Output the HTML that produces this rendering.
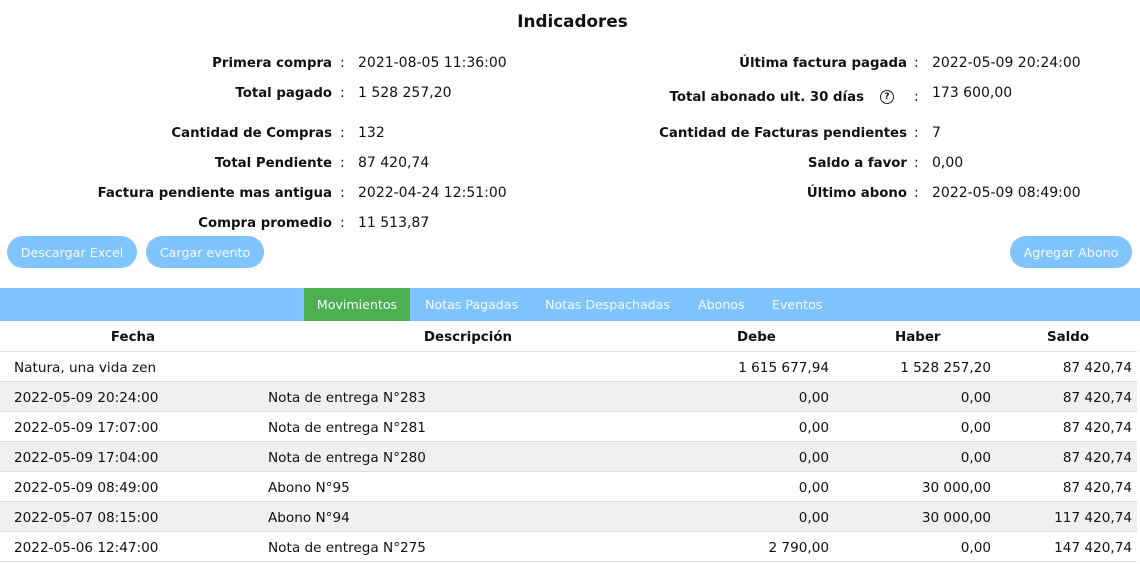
<!DOCTYPE html>
<html><head><meta charset="utf-8"><style>
body{margin:0;width:1140px;height:560px;overflow:hidden;background:#fff;font-family:"DejaVu Sans",Verdana,sans-serif;font-size:14px;color:#111;position:relative}
.a{position:absolute;white-space:nowrap;line-height:18px;margin-top:1px}
.l{font-weight:bold;text-align:right;font-size:13.3px;margin-top:2px}
.btn{position:absolute;top:236px;height:32px;border-radius:16px;background:#80c4ff;color:#f4faff;line-height:33px;text-align:center;font-size:12.7px}
.bar{position:absolute;top:288px;left:0;width:1140px;height:33px;background:#80c4ff}
.tab{position:absolute;top:288px;height:33px;line-height:33px;color:#f4faff;font-size:12.6px}
.row{position:absolute;left:0;width:1137px;height:30px;border-bottom:1px solid #ddd;box-sizing:border-box;font-size:13.6px}
.g{background:#f0f0f0}
.c{position:absolute;line-height:32px;white-space:nowrap}
.r{text-align:right}
</style></head><body>
<div class="a" style="left:0;width:1145px;text-align:center;top:9px;font-size:16.8px;font-weight:bold;line-height:22px">Indicadores</div>

<div class="a l" style="right:808px;top:53px">Primera compra</div><div class="a" style="left:340px;top:53px">:</div><div class="a" style="left:358px;top:53px">2021-08-05 11:36:00</div>
<div class="a l" style="right:808px;top:83px">Total pagado</div><div class="a" style="left:340px;top:83px">:</div><div class="a" style="left:358px;top:83px">1 528 257,20</div>
<div class="a l" style="right:808px;top:123px">Cantidad de Compras</div><div class="a" style="left:340px;top:123px">:</div><div class="a" style="left:358px;top:123px">132</div>
<div class="a l" style="right:808px;top:153px">Total Pendiente</div><div class="a" style="left:340px;top:153px">:</div><div class="a" style="left:358px;top:153px">87 420,74</div>
<div class="a l" style="right:808px;top:183px">Factura pendiente mas antigua</div><div class="a" style="left:340px;top:183px">:</div><div class="a" style="left:358px;top:183px">2022-04-24 12:51:00</div>
<div class="a l" style="right:808px;top:213px">Compra promedio</div><div class="a" style="left:340px;top:213px">:</div><div class="a" style="left:358px;top:213px">11 513,87</div>

<div class="a l" style="right:233px;top:53px">Última factura pagada</div><div class="a" style="left:914px;top:53px">:</div><div class="a" style="left:932px;top:53px">2022-05-09 20:24:00</div>
<div class="a l" style="right:276px;top:87px">Total abonado ult. 30 días</div>
<div class="a" style="left:880px;top:89px;width:12px;height:12px;border:1.3px solid #222;border-radius:50%;font-size:9px;line-height:12px;text-align:center;font-weight:bold">?</div>
<div class="a" style="left:914px;top:87px">:</div><div class="a" style="left:932px;top:83px">173 600,00</div>
<div class="a l" style="right:233px;top:123px">Cantidad de Facturas pendientes</div><div class="a" style="left:914px;top:123px">:</div><div class="a" style="left:932px;top:123px">7</div>
<div class="a l" style="right:233px;top:153px">Saldo a favor</div><div class="a" style="left:914px;top:153px">:</div><div class="a" style="left:932px;top:153px">0,00</div>
<div class="a l" style="right:233px;top:183px">Último abono</div><div class="a" style="left:914px;top:183px">:</div><div class="a" style="left:932px;top:183px">2022-05-09 08:49:00</div>

<div class="btn" style="left:7px;width:130px">Descargar Excel</div>
<div class="btn" style="left:146px;width:118px">Cargar evento</div>
<div class="btn" style="left:1010px;width:122px">Agregar Abono</div>

<div class="bar"></div>
<div class="tab" style="left:304px;width:106px;background:#4caf50;text-align:center">Movimientos</div>
<div class="tab" style="left:425px">Notas Pagadas</div>
<div class="tab" style="left:545px">Notas Despachadas</div>
<div class="tab" style="left:698px">Abonos</div>
<div class="tab" style="left:772px">Eventos</div>

<div class="row" style="top:321px;height:31px;font-weight:bold;font-size:13.4px">
<div class="c" style="left:0;width:266px;text-align:center;line-height:34px">Fecha</div>
<div class="c" style="left:268px;width:400px;text-align:center;line-height:34px">Descripción</div>
<div class="c" style="left:737px;line-height:34px">Debe</div>
<div class="c" style="left:895px;line-height:34px">Haber</div>
<div class="c" style="left:1047px;line-height:34px">Saldo</div>
</div>

<div class="row" style="top:352px"><div class="c" style="left:14px">Natura, una vida zen</div><div class="c r" style="right:308px">1 615 677,94</div><div class="c r" style="right:146px">1 528 257,20</div><div class="c r" style="right:5px">87 420,74</div></div>
<div class="row g" style="top:382px"><div class="c" style="left:14px">2022-05-09 20:24:00</div><div class="c" style="left:268px">Nota de entrega N°283</div><div class="c r" style="right:308px">0,00</div><div class="c r" style="right:146px">0,00</div><div class="c r" style="right:5px">87 420,74</div></div>
<div class="row" style="top:412px"><div class="c" style="left:14px">2022-05-09 17:07:00</div><div class="c" style="left:268px">Nota de entrega N°281</div><div class="c r" style="right:308px">0,00</div><div class="c r" style="right:146px">0,00</div><div class="c r" style="right:5px">87 420,74</div></div>
<div class="row g" style="top:442px"><div class="c" style="left:14px">2022-05-09 17:04:00</div><div class="c" style="left:268px">Nota de entrega N°280</div><div class="c r" style="right:308px">0,00</div><div class="c r" style="right:146px">0,00</div><div class="c r" style="right:5px">87 420,74</div></div>
<div class="row" style="top:472px"><div class="c" style="left:14px">2022-05-09 08:49:00</div><div class="c" style="left:268px">Abono N°95</div><div class="c r" style="right:308px">0,00</div><div class="c r" style="right:146px">30 000,00</div><div class="c r" style="right:5px">87 420,74</div></div>
<div class="row g" style="top:502px"><div class="c" style="left:14px">2022-05-07 08:15:00</div><div class="c" style="left:268px">Abono N°94</div><div class="c r" style="right:308px">0,00</div><div class="c r" style="right:146px">30 000,00</div><div class="c r" style="right:5px">117 420,74</div></div>
<div class="row" style="top:532px"><div class="c" style="left:14px">2022-05-06 12:47:00</div><div class="c" style="left:268px">Nota de entrega N°275</div><div class="c r" style="right:308px">2 790,00</div><div class="c r" style="right:146px">0,00</div><div class="c r" style="right:5px">147 420,74</div></div>
</body></html>
